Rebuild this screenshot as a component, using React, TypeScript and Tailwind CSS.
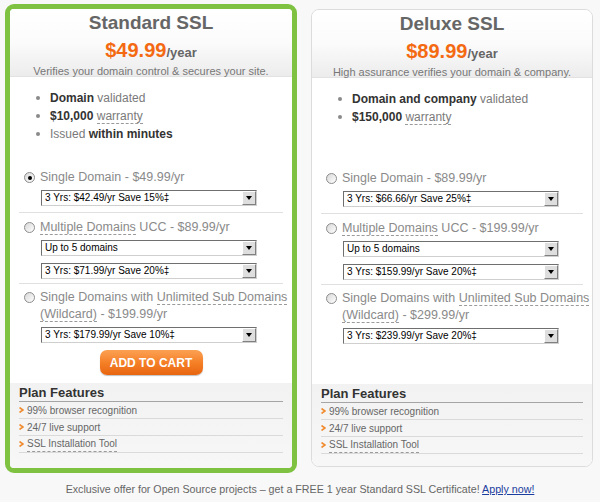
import React from 'react';

type Option = { label: React.ReactNode; selects: string[]; checked?: boolean };

interface PlanProps {
  title: string;
  price: string;
  subtitle: string;
  bullets: React.ReactNode[];
  options: Option[];
  featured?: boolean;
}

const font = "font-['Liberation_Sans',Arial,sans-serif]";

const Dashed = ({ children }: { children: React.ReactNode }) => (
  <span className="border-b border-dashed border-[#9a9a9a]">{children}</span>
);

const Select = ({ value }: { value: string }) => (
  <div className="ml-[22px] flex h-[16px] w-[216px] border border-[#6f6f6f] border-r-[#cfcfcf] border-b-[#cfcfcf] bg-white">
    <div className="flex-1 truncate pl-[3px] text-[10px] leading-[14px] text-black">{value}</div>
    <div className="flex w-[14px] items-center justify-center border border-t-white border-l-white border-r-[#808080] border-b-[#808080] bg-[#dedede]">
      <span className="block h-0 w-0 border-x-[3.5px] border-t-[4px] border-x-transparent border-t-black" />
    </div>
  </div>
);

const Radio = ({ checked }: { checked?: boolean }) => (
  <span className="ml-[5px] mt-[3px] flex h-[11px] w-[11px] shrink-0 items-center justify-center rounded-full border border-[#8c8c8c] bg-linear-to-br from-[#d8d8d8] to-white">
    {checked && <span className="h-[4px] w-[4px] rounded-full bg-black" />}
  </span>
);

const Chevron = () => (
  <svg width="5" height="6" viewBox="0 0 5 6" className="mr-[3px] shrink-0">
    <path d="M0.5 0.5 L4 3 L0.5 5.5" fill="none" stroke="#f08a2c" strokeWidth="1.6" />
  </svg>
);

const PlanCard: React.FC<PlanProps> = ({ title, price, subtitle, bullets, options, featured }) => (
  <div
    className={
      featured
        ? 'flex h-[469px] w-[292px] flex-col overflow-hidden rounded-[9px] border-[5px] border-[#7fc241] bg-white'
        : 'mt-[5px] ml-[14px] flex h-[458px] w-[282px] flex-col overflow-hidden rounded-[8px] border border-[#dcdcdc] bg-white'
    }
  >
    <div className="h-[68px] border-b border-[#e2e2e2] bg-linear-to-b from-white via-[#fbfbfb] to-[#ececec] pt-[3px] text-center">
      <div className="text-[19px] font-bold leading-[22px] text-[#666]">{title}</div>
      <div className="mt-[4px] leading-[24px]">
        <span className="text-[20px] font-bold text-[#f46a12]">{price}</span>
        <span className="text-[13px] font-bold text-[#666]">/year</span>
      </div>
      <div className="text-[11px] leading-[13px] text-[#777]">{subtitle}</div>
    </div>

    <ul className="h-[92px] pt-[12px] text-[12px] leading-[18px] text-[#7a7a7a]">
      {bullets.map((b, i) => (
        <li key={i} className="flex items-center">
          <span className="ml-[26px] mr-[10px] h-[4px] w-[4px] rounded-full bg-[#8a8a8a]" />
          <span>{b}</span>
        </li>
      ))}
    </ul>

    {options.map((o, i) => (
      <div
        key={i}
        className={
          i === 0
            ? 'mx-[9px] border-b border-[#e0e0e0] pb-[6px]'
            : i === 1
              ? 'mx-[9px] border-b border-[#e0e0e0] pt-[6px] pb-[4px]'
              : 'mx-[9px] pt-[5px]'
        }
      >
        <div className="flex items-start gap-[5px]">
          <Radio checked={o.checked} />
          <div className="whitespace-nowrap text-[12.5px] leading-[17px] text-[#8a8a8a]">{o.label}</div>
        </div>
        {o.selects.map((s, j) => (
          <div key={j} className={j === 0 ? 'mt-[4px]' : 'mt-[7px]'}>
            <Select value={s} />
          </div>
        ))}
      </div>
    ))}

    <div className="mt-[7px] mb-[8px] flex h-[25px] justify-center">
      {featured && (
        <button className="h-[25px] w-[103px] rounded-[7px] bg-linear-to-b from-[#fba152] via-[#f58026] to-[#e8650f] text-[12px] font-bold text-white shadow-[0_1px_1px_rgba(0,0,0,0.25)]">
          ADD TO CART
        </button>
      )}
    </div>

    <div className="flex-1 bg-linear-to-b from-[#f2f2f2] to-[#f7f7f7] px-[9px] pt-[2px]">
      <div className="border-b border-[#a5a5a5] text-[13px] font-bold leading-[16px] text-[#333]">Plan Features</div>
      {['99% browser recognition', '24/7 live support', 'SSL Installation Tool'].map((f, i) => (
        <div key={f} className="flex h-[17px] items-center border-b border-[#dadada] text-[10px] text-[#666]">
          <Chevron />
          {i === 2 ? <Dashed>{f}</Dashed> : f}
        </div>
      ))}
    </div>
  </div>
);

export default function App() {
  return (
    <div className={`${font} h-[502px] w-[600px] bg-[#f8f8f8] pl-[5px] pt-[4px]`}>
      <div className="flex items-start">
        <PlanCard
          featured
          title="Standard SSL"
          price="$49.99"
          subtitle="Verifies your domain control & secures your site."
          bullets={[
            <><b className="text-[#333]">Domain</b> validated</>,
            <><b className="text-[#333]">$10,000</b> <Dashed>warranty</Dashed></>,
            <>Issued <b className="text-[#333]">within minutes</b></>,
          ]}
          options={[
            { checked: true, label: 'Single Domain - $49.99/yr', selects: ['3 Yrs: $42.49/yr Save 15%‡'] },
            {
              label: <><Dashed>Multiple Domains</Dashed> UCC - $89.99/yr</>,
              selects: ['Up to 5 domains', '3 Yrs: $71.99/yr Save 20%‡'],
            },
            {
              label: <>Single Domains with <Dashed>Unlimited Sub Domains</Dashed><br /><Dashed>(Wildcard)</Dashed> - $199.99/yr</>,
              selects: ['3 Yrs: $179.99/yr Save 10%‡'],
            },
          ]}
        />
        <PlanCard
          title="Deluxe SSL"
          price="$89.99"
          subtitle="High assurance verifies your domain & company."
          bullets={[
            <><b className="text-[#333]">Domain and company</b> validated</>,
            <><b className="text-[#333]">$150,000</b> <Dashed>warranty</Dashed></>,
          ]}
          options={[
            { label: 'Single Domain - $89.99/yr', selects: ['3 Yrs: $66.66/yr Save 25%‡'] },
            {
              label: <><Dashed>Multiple Domains</Dashed> UCC - $199.99/yr</>,
              selects: ['Up to 5 domains', '3 Yrs: $159.99/yr Save 20%‡'],
            },
            {
              label: <>Single Domains with <Dashed>Unlimited Sub Domains</Dashed><br /><Dashed>(Wildcard)</Dashed> - $299.99/yr</>,
              selects: ['3 Yrs: $239.99/yr Save 20%‡'],
            },
          ]}
        />
      </div>
      <p className="mt-[9px] pr-[5px] text-center text-[10.7px] leading-[14px] text-[#666]">
        Exclusive offer for Open Source projects – get a FREE 1 year Standard SSL Certificate!{' '}
        <a href="#" className="text-[#1b3d9e] underline">Apply now!</a>
      </p>
    </div>
  );
}
